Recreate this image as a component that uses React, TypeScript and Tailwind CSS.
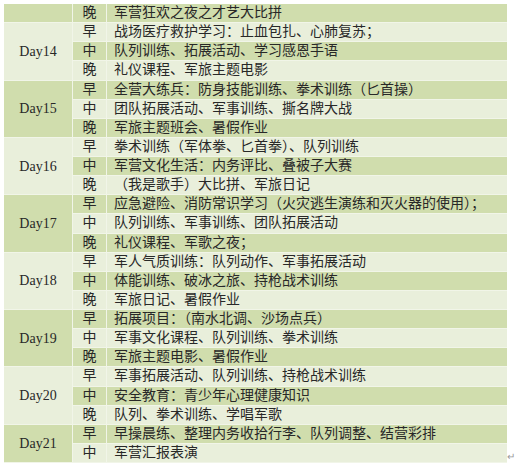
import React from "react";

type Group = { day: string; rows: [string, string][] };

const groups: Group[] = [
  { day: "", rows: [["晚", "军营狂欢之夜之才艺大比拼"]] },
  {
    day: "Day14",
    rows: [
      ["早", "战场医疗救护学习：止血包扎、心肺复苏；"],
      ["中", "队列训练、拓展活动、学习感恩手语"],
      ["晚", "礼仪课程、军旅主题电影"],
    ],
  },
  {
    day: "Day15",
    rows: [
      ["早", "全营大练兵：防身技能训练、拳术训练（匕首操）"],
      ["中", "团队拓展活动、军事训练、撕名牌大战"],
      ["晚", "军旅主题班会、暑假作业"],
    ],
  },
  {
    day: "Day16",
    rows: [
      ["早", "拳术训练（军体拳、匕首拳）、队列训练"],
      ["中", "军营文化生活：内务评比、叠被子大赛"],
      ["晚", "（我是歌手）大比拼、军旅日记"],
    ],
  },
  {
    day: "Day17",
    rows: [
      ["早", "应急避险、消防常识学习（火灾逃生演练和灭火器的使用）；"],
      ["中", "队列训练、军事训练、团队拓展活动"],
      ["晚", "礼仪课程、军歌之夜；"],
    ],
  },
  {
    day: "Day18",
    rows: [
      ["早", "军人气质训练：队列动作、军事拓展活动"],
      ["中", "体能训练、破冰之旅、持枪战术训练"],
      ["晚", "军旅日记、暑假作业"],
    ],
  },
  {
    day: "Day19",
    rows: [
      ["早", "拓展项目：（南水北调、沙场点兵）"],
      ["中", "军事文化课程、队列训练、拳术训练"],
      ["晚", "军旅主题电影、暑假作业"],
    ],
  },
  {
    day: "Day20",
    rows: [
      ["早", "军事拓展活动、队列训练、持枪战术训练"],
      ["中", "安全教育：青少年心理健康知识"],
      ["晚", "队列、拳术训练、学唱军歌"],
    ],
  },
  {
    day: "Day21",
    rows: [
      ["早", "早操晨练、整理内务收拾行李、队列调整、结营彩排"],
      ["中", "军营汇报表演"],
    ],
  },
];

export default function App() {
  let idx = 0;
  return (
    <div
      className="relative w-[515px] h-[466px] bg-white pt-[4px] pl-[4px] text-[#282828]"
      style={{ fontFamily: '"Liberation Serif", "Noto Sans CJK SC", serif' }}
    >
      <div className="w-[503px] flex flex-col">
        {groups.map((g, gi) => (
          <div key={gi} className="flex">
            <div
              className={
                "w-[69px] shrink-0 flex items-center justify-center text-[14px] border-r border-b border-[#f1f5e8] " +
                (gi % 2 === 0 ? "bg-[#d0ddad]" : "bg-[#e9efdb]")
              }
            >
              {g.day}
            </div>
            <div className="flex-1 flex flex-col">
              {g.rows.map(([p, c], ri) => {
                const dark = idx % 2 === 0;
                idx++;
                return (
                  <div
                    key={ri}
                    className={
                      "flex h-[19.125px] border-b border-[#f1f5e8] text-[14px] leading-[18px] " +
                      (dark ? "bg-[#d0ddad]" : "bg-[#e9efdb]")
                    }
                  >
                    <div className="w-[34px] shrink-0 flex items-center justify-center border-r border-[#f1f5e8]">
                      {p}
                    </div>
                    <div className="flex-1 flex items-center pl-[7px] whitespace-nowrap overflow-hidden">
                      {c}
                    </div>
                  </div>
                );
              })}
            </div>
          </div>
        ))}
      </div>
      <div className="absolute left-[507px] top-[452px] text-[10px] leading-[10px] text-[#9a9a9a]">
        ↵
      </div>
    </div>
  );
}
